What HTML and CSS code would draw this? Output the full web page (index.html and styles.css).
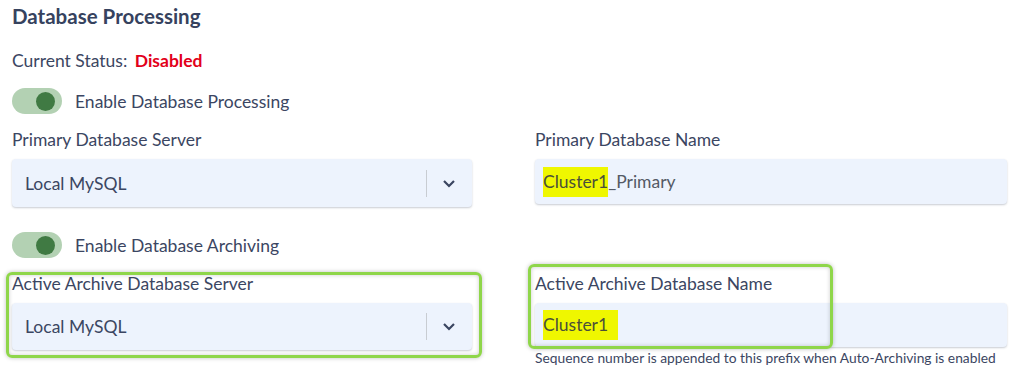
FILE: index.html
```html
<!DOCTYPE html>
<html>
<head>
    <title>Database Processing</title>
    <link rel="stylesheet" href="styles.css">
</head>
<body>
    <div class="panel">
        <h2 class="title">Database Processing</h2>

        <div class="status">
            Current Status:
            <span class="status-value">Disabled</span>
        </div>

        <label class="switch-row">
            <span class="switch"><span class="knob"></span></span>
            Enable Database Processing
        </label>

        <div class="grid">
            <div class="field">
                <div class="label">Primary Database Server</div>
                <div class="select">
                    <span class="select-value">Local MySQL</span>
                    <span class="sep"></span>
                    <svg class="chevron" width="14" height="9" viewBox="0 0 14 9"><path d="M2 2l5 5 5-5" fill="none" stroke="#3a4560" stroke-width="2.2"/></svg>
                </div>
            </div>
            <div class="field">
                <div class="label">Primary Database Name</div>
                <div class="input"><span class="mark">Cluster1</span>_Primary</div>
            </div>
        </div>

        <label class="switch-row">
            <span class="switch"><span class="knob"></span></span>
            Enable Database Archiving
        </label>

        <div class="grid grid-last">
            <div class="field">
                <div class="label">Active Archive Database Server</div>
                <div class="select">
                    <span class="select-value">Local MySQL</span>
                    <span class="sep"></span>
                    <svg class="chevron" width="14" height="9" viewBox="0 0 14 9"><path d="M2 2l5 5 5-5" fill="none" stroke="#3a4560" stroke-width="2.2"/></svg>
                </div>
                <div class="callout callout-left"></div>
            </div>
            <div class="field">
                <div class="label">Active Archive Database Name</div>
                <div class="input input-short"><span class="mark mark-pad">Cluster1</span></div>
                <div class="hint">Sequence number is appended to this prefix when Auto-Archiving is enabled</div>
                <div class="callout callout-right"></div>
            </div>
        </div>
    </div>
</body>
</html>
```

FILE: styles.css
```css
body {
    margin: 0;
    padding: 0;
    background-color: #fff;
    font-family: Lato, "Open Sans", sans-serif;
    color: #3b4662;
}

.panel {
    padding: 4px 9px 0 12px;
}

.title {
    margin: 0;
    font-size: 20.5px;
    font-weight: bold;
    color: #36425e;
    line-height: 24px;
}

.status {
    margin-top: 23px;
    font-size: 17.5px;
    line-height: 20px;
}

.status-value {
    margin-left: 3px;
    color: #e2001a;
    font-weight: bold;
}

.switch-row {
    display: flex;
    align-items: center;
    gap: 13px;
    margin-top: 17px;
    font-size: 17.5px;
    height: 26px;
}

.switch {
    width: 50px;
    height: 26px;
    border-radius: 13px;
    background-color: #b3d1b3;
    display: flex;
    align-items: center;
    justify-content: flex-end;
    padding-right: 7px;
    box-sizing: border-box;
}

.knob {
    width: 19px;
    height: 19px;
    border-radius: 50%;
    background-color: #407a43;
}

.grid {
    display: grid;
    grid-template-columns: 460px 472px;
    column-gap: 63px;
    margin-top: 16px;
    margin-bottom: 25px;
}

.grid-last {
    margin-bottom: 0;
}

.field {
    position: relative;
}

.label {
    font-size: 17.5px;
    line-height: 20px;
    margin-bottom: 9px;
}

.select,
.input {
    height: 48px;
    background-color: #edf3fd;
    border-radius: 4px;
    box-shadow: 0 1px 2px rgba(40, 50, 80, 0.25);
    display: flex;
    align-items: center;
    font-size: 17.5px;
}

.select {
    padding: 0 0 0 13px;
}

.select-value {
    flex: 1;
}

.sep {
    width: 1px;
    height: 27px;
    background-color: #c8ccd2;
}

.chevron {
    margin: 0 16px 0 15px;
}

.input {
    padding-left: 8px;
    height: 45px;
    color: #545a66;
}

.mark {
    background-color: #eff700;
    line-height: 30px;
    display: inline-block;
    color: #4a4f3a;
}

.mark-pad {
    padding-right: 10px;
}

.grid-last .select {
    height: 47px;
}

.input-short {
    height: 44px;
}

.hint {
    margin-top: 3px;
    font-size: 13.8px;
    line-height: 16px;
}

.callout {
    position: absolute;
    box-sizing: border-box;
    border: 3px solid #8fd64a;
    border-radius: 6px;
    box-shadow: 0 0 4px rgba(0, 0, 0, 0.25), inset 0 0 4px rgba(0, 0, 0, 0.2);
}

.callout-left {
    left: -6px;
    top: -2px;
    width: 476px;
    height: 86px;
}

.callout-right {
    left: -7px;
    top: -10px;
    width: 305px;
    height: 85px;
}
```
